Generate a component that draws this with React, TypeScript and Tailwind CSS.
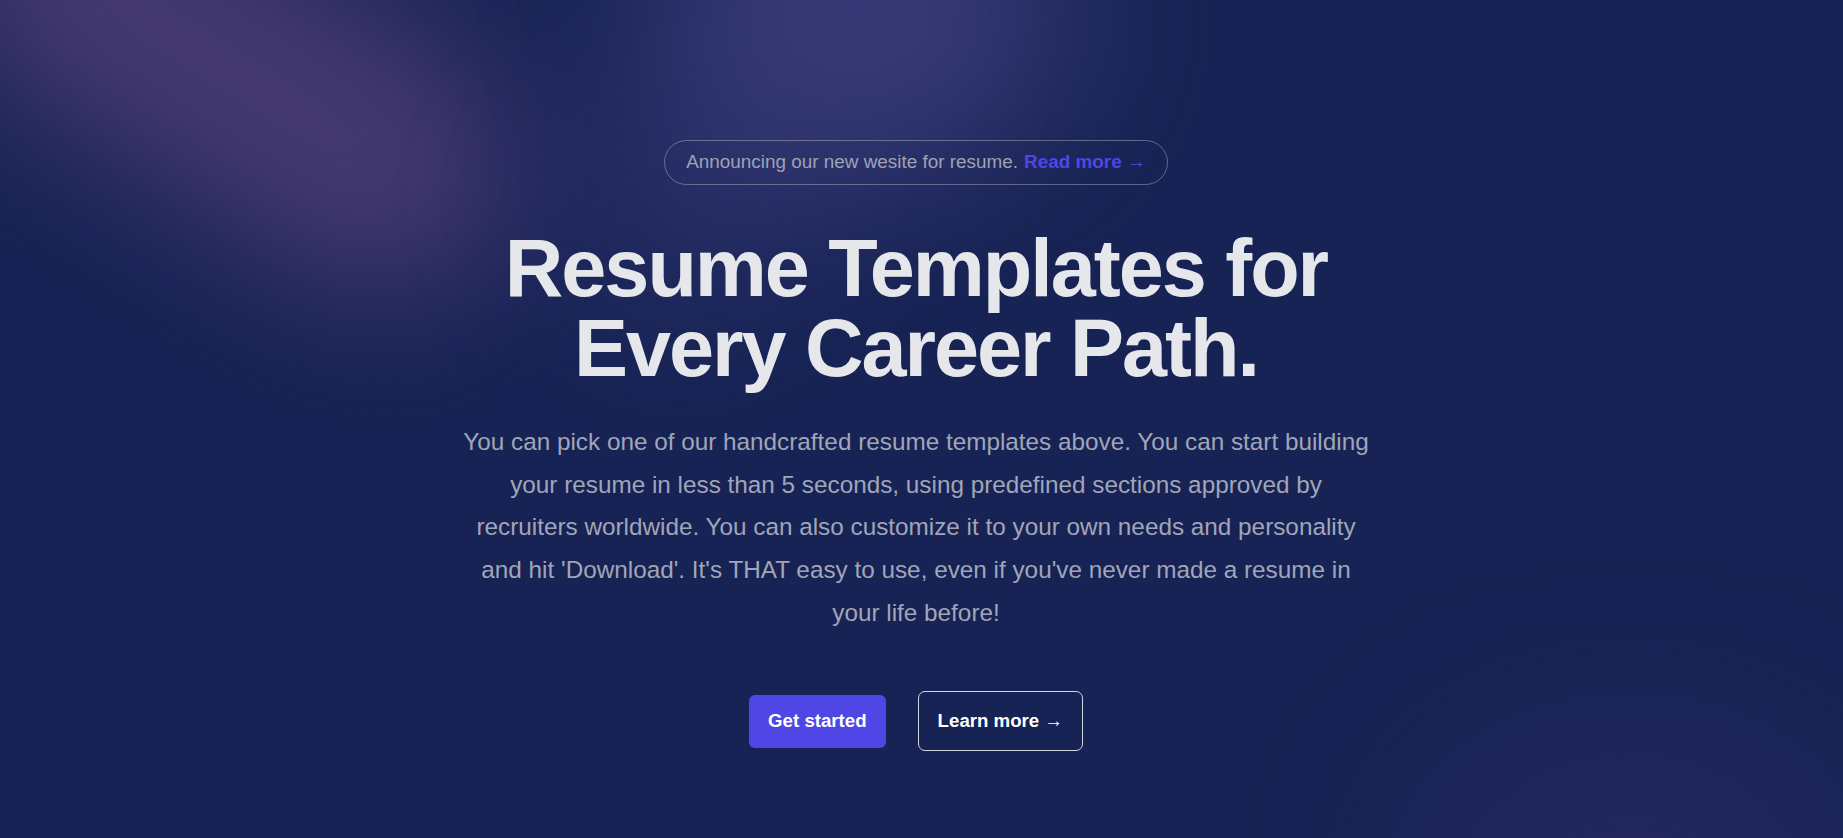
export default function App() {
  return (
    <div className="relative isolate min-h-[838px] w-full overflow-hidden bg-[#172354] font-['Liberation_Sans',Arial,sans-serif]">
      {/* background glows */}
      <div className="absolute -z-10 left-[-80px] top-[-60px] h-[260px] w-[620px] rotate-[32deg] rounded-full bg-[#4b3c76] opacity-90 blur-[70px]" />
      <div className="absolute -z-10 left-[660px] top-[-120px] h-[260px] w-[400px] rounded-full bg-[#41417f] opacity-90 blur-[90px]" />
      <div className="absolute -z-10 left-[560px] top-[40px] h-[170px] w-[420px] -rotate-[40deg] rounded-full bg-[#373a78] opacity-70 blur-[90px]" />
      <div className="absolute -z-10 left-[1440px] top-[780px] h-[240px] w-[380px] rounded-full bg-[#2e2c66] opacity-80 blur-[110px]" />

      <main className="flex flex-col items-center pr-[11px] pt-[140px]">
        <div className="flex h-[45px] items-center rounded-full border border-white/30 px-[21px] text-[18.9px] text-[#9ea2b6]">
          <span>Announcing our new wesite for resume.</span>
          <a href="#" className="ml-[6px] font-bold text-[#5046e5]">
            Read more <span aria-hidden="true" className="font-normal">&rarr;</span>
          </a>
        </div>

        <h1 className="mt-[43px] text-center text-[81px] font-bold leading-[80px] tracking-tight text-[#e5e7eb]">
          Resume Templates for
          <br />
          Every Career Path.
        </h1>

        <p className="mt-[33px] w-[912px] text-center text-[24.3px] leading-[42.67px] text-[#a1a5b8]">
          You can pick one of our handcrafted resume templates above. You can start building your resume in less than 5 seconds, using predefined sections approved by recruiters worldwide. You can also customize it to your own needs and personality and hit 'Download'. It's THAT easy to use, even if you've never made a resume in your life before!
        </p>

        <div className="mt-[57px] flex items-center gap-x-[32px]">
          <a href="#" className="rounded-[6px] bg-[#4f46e5] px-[19px] py-[13px] text-[18.67px] font-bold leading-[26.67px] text-white">
            Get started
          </a>
          <a href="#" className="flex h-[60px] items-center rounded-[7px] border border-[#d4d6e0] px-[19px] text-[18.67px] font-bold text-white">
            Learn more <span aria-hidden="true" className="ml-[5px] font-normal">&rarr;</span>
          </a>
        </div>
      </main>
    </div>
  )
}
